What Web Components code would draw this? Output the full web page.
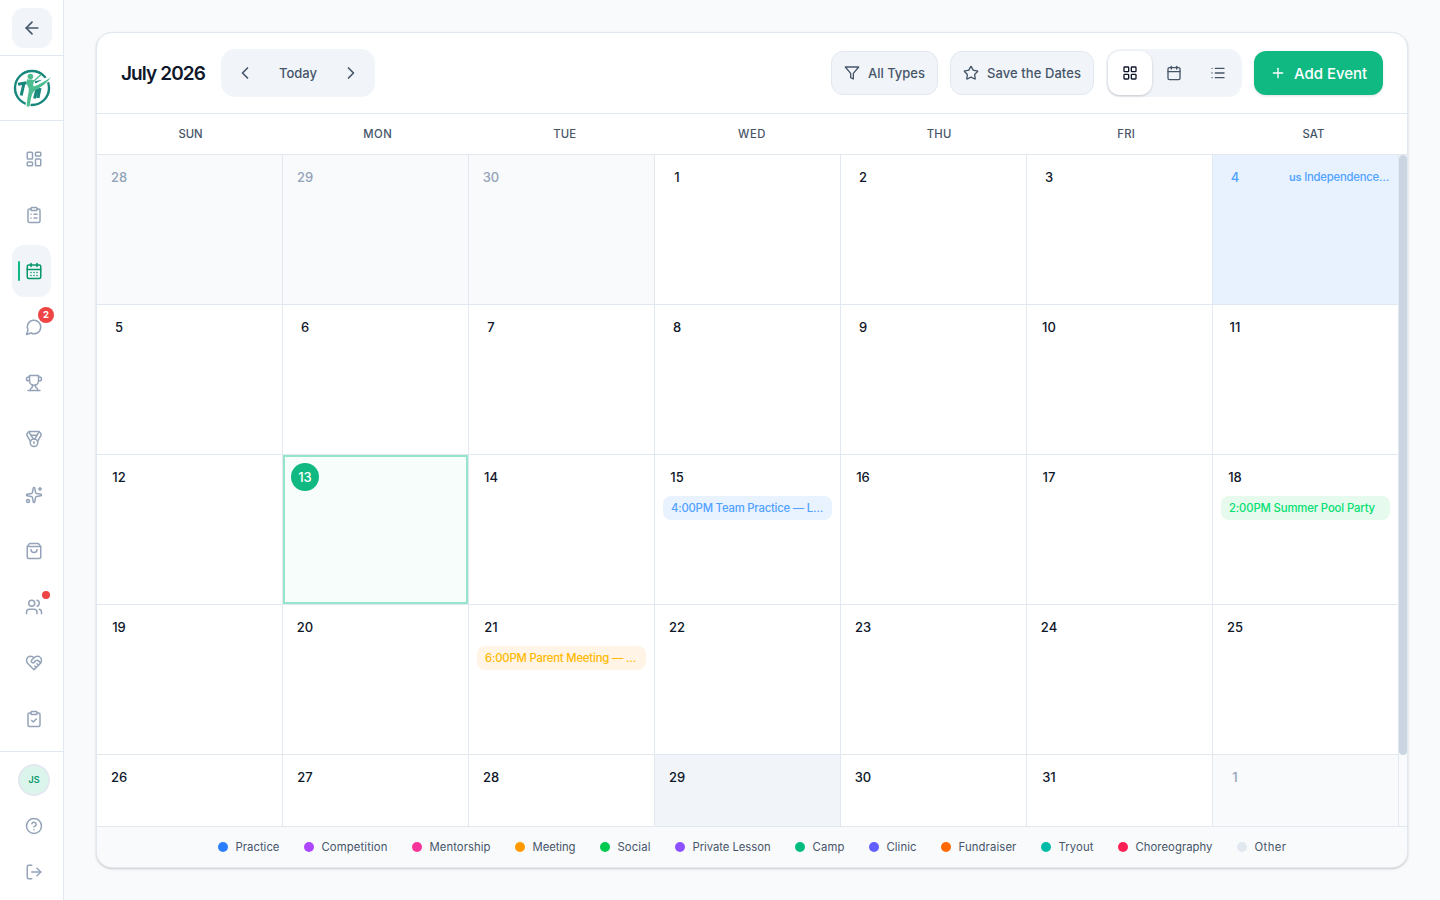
<!DOCTYPE html>
<html lang="en">
<head>
<meta charset="utf-8">
<title>Team Calendar</title>
<style>
    body {
        margin: 0;
        height: 900px;
        overflow: hidden;
        background: #f8fafc;
        color: #0f172a;
        font-family: Inter, "Liberation Sans", sans-serif;
    }
</style>
</head>
<body>
<team-app></team-app>

<script>
const ICONS = {
    back: '<path d="m12 19-7-7 7-7"/><path d="M19 12H5"/>',
    dashboard: '<rect width="7" height="9" x="3" y="3" rx="1"/><rect width="7" height="5" x="14" y="3" rx="1"/><rect width="7" height="9" x="14" y="12" rx="1"/><rect width="7" height="5" x="3" y="16" rx="1"/>',
    clipboardList: '<rect width="8" height="4" x="8" y="2" rx="1"/><path d="M16 4h2a2 2 0 0 1 2 2v14a2 2 0 0 1-2 2H6a2 2 0 0 1-2-2V6a2 2 0 0 1 2-2h2"/><path d="M12 11h4"/><path d="M12 16h4"/><path d="M8 11h.01"/><path d="M8 16h.01"/>',
    calendarDays: '<path d="M8 2v4"/><path d="M16 2v4"/><rect width="18" height="18" x="3" y="4" rx="2"/><path d="M3 10h18"/><path d="M8 14h.01"/><path d="M12 14h.01"/><path d="M16 14h.01"/><path d="M8 18h.01"/><path d="M12 18h.01"/><path d="M16 18h.01"/>',
    message: '<path d="M7.9 20A9 9 0 1 0 4 16.1L2 22Z"/>',
    trophy: '<path d="M6 9H4.5a2.5 2.5 0 0 1 0-5H6"/><path d="M18 9h1.5a2.5 2.5 0 0 0 0-5H18"/><path d="M4 22h16"/><path d="M10 14.66V17c0 .55-.47.98-.97 1.21C7.85 18.75 7 20.24 7 22"/><path d="M14 14.66V17c0 .55.47.98.97 1.21C16.15 18.75 17 20.24 17 22"/><path d="M18 2H6v7a6 6 0 0 0 12 0V2Z"/>',
    medal: '<path d="M7.21 15 2.66 7.14a2 2 0 0 1 .13-2.2L4.4 2.8A2 2 0 0 1 6 2h12a2 2 0 0 1 1.6.8l1.6 2.14a2 2 0 0 1 .14 2.2L16.79 15"/><path d="M11 12 5.12 2.2"/><path d="m13 12 5.88-9.8"/><path d="M8 7h8"/><circle cx="12" cy="17" r="5"/><path d="M12 18v-2h-.5"/>',
    sparkles: '<path d="M11.017 2.814a1 1 0 0 1 1.966 0l1.051 5.558a2 2 0 0 0 1.594 1.594l5.558 1.051a1 1 0 0 1 0 1.966l-5.558 1.051a2 2 0 0 0-1.594 1.594l-1.051 5.558a1 1 0 0 1-1.966 0l-1.051-5.558a2 2 0 0 0-1.594-1.594l-5.558-1.051a1 1 0 0 1 0-1.966l5.558-1.051a2 2 0 0 0 1.594-1.594z"/><path d="M20 2v4"/><path d="M22 4h-4"/><circle cx="4" cy="20" r="2"/>',
    bag: '<path d="M16 10a4 4 0 0 1-8 0"/><path d="M3.103 6.034h17.794"/><path d="M3.4 5.467a2 2 0 0 0-.4 1.2V20a2 2 0 0 0 2 2h14a2 2 0 0 0 2-2V6.667a2 2 0 0 0-.4-1.2l-2-2.667A2 2 0 0 0 17 2H7a2 2 0 0 0-1.6.8z"/>',
    users: '<path d="M16 21v-2a4 4 0 0 0-4-4H6a4 4 0 0 0-4 4v2"/><circle cx="9" cy="7" r="4"/><path d="M22 21v-2a4 4 0 0 0-3-3.87"/><path d="M16 3.13a4 4 0 0 1 0 7.75"/>',
    handshake: '<path d="M19 14c1.49-1.46 3-3.21 3-5.5A5.5 5.5 0 0 0 16.5 3c-1.76 0-3 .5-4.5 2-1.5-1.5-2.74-2-4.5-2A5.5 5.5 0 0 0 2 8.5c0 2.3 1.5 4.05 3 5.5l7 7Z"/><path d="M12 5 9.04 7.96a2.17 2.17 0 0 0 0 3.08c.82.82 2.13.85 3 .07l2.07-1.9a2.82 2.82 0 0 1 3.79 0l2.96 2.66"/><path d="m18 15-2-2"/><path d="m15 18-2-2"/>',
    clipboardCheck: '<rect width="8" height="4" x="8" y="2" rx="1"/><path d="M16 4h2a2 2 0 0 1 2 2v14a2 2 0 0 1-2 2H6a2 2 0 0 1-2-2V6a2 2 0 0 1 2-2h2"/><path d="m9 14 2 2 4-4"/>',
    help: '<circle cx="12" cy="12" r="10"/><path d="M9.09 9a3 3 0 0 1 5.83 1c0 2-3 3-3 3"/><path d="M12 17h.01"/>',
    logout: '<path d="M9 21H5a2 2 0 0 1-2-2V5a2 2 0 0 1 2-2h4"/><path d="m16 17 5-5-5-5"/><path d="M21 12H9"/>',
    left: '<path d="m15 18-6-6 6-6"/>',
    right: '<path d="m9 18 6-6-6-6"/>',
    filter: '<path d="M22 3H2l8 9.46V19l4 2v-8.54Z"/>',
    star: '<path d="M11.525 2.295a.53.53 0 0 1 .95 0l2.31 4.679a2.123 2.123 0 0 0 1.595 1.16l5.166.756a.53.53 0 0 1 .294.904l-3.736 3.638a2.123 2.123 0 0 0-.611 1.878l.882 5.14a.53.53 0 0 1-.771.56l-4.618-2.428a2.122 2.122 0 0 0-1.973 0L6.396 21.01a.53.53 0 0 1-.77-.56l.881-5.139a2.122 2.122 0 0 0-.611-1.879L2.16 9.795a.53.53 0 0 1 .294-.906l5.165-.755a2.122 2.122 0 0 0 1.597-1.16z"/>',
    grid: '<rect width="7" height="7" x="3" y="3" rx="1"/><rect width="7" height="7" x="14" y="3" rx="1"/><rect width="7" height="7" x="14" y="14" rx="1"/><rect width="7" height="7" x="3" y="14" rx="1"/>',
    calendar: '<path d="M8 2v4"/><path d="M16 2v4"/><rect width="18" height="18" x="3" y="4" rx="2"/><path d="M3 10h18"/>',
    list: '<path d="M3 5h.01"/><path d="M3 12h.01"/><path d="M3 19h.01"/><path d="M8 5h13"/><path d="M8 12h13"/><path d="M8 19h13"/>',
    plus: '<path d="M5 12h14"/><path d="M12 5v14"/>'
};

class UiIcon extends HTMLElement {
    constructor() {
        super();
        this.attachShadow({ mode: 'open' });
    }

    connectedCallback() {
        const size = this.getAttribute('size') || 18;
        this.shadowRoot.innerHTML = `
            <style>
                :host { display: block; flex: none; width: ${size}px; height: ${size}px; }
                svg { display: block; }
            </style>
            <svg width="${size}" height="${size}" viewBox="0 0 24 24" fill="none" stroke="currentColor"
                stroke-width="2" stroke-linecap="round" stroke-linejoin="round">${ICONS[this.getAttribute('name')]}</svg>
        `;
    }
}
customElements.define('ui-icon', UiIcon);

// Label with a fixed width: the tracking is adjusted until the text fills it.
class FitLabel extends HTMLElement {
    constructor() {
        super();
        this.attachShadow({ mode: 'open' });
        this.shadowRoot.innerHTML = `
            <style>
                :host { display: block; flex: none; white-space: nowrap; }
                span { display: inline-block; }
            </style>
            <span><slot></slot></span>
        `;
    }

    connectedCallback() {
        const width = Number(this.getAttribute('width'));
        const span = this.shadowRoot.querySelector('span');
        const natural = span.getBoundingClientRect().width;
        const count = this.textContent.length;
        this.style.width = width + 'px';
        span.style.letterSpacing = ((width - natural) / count).toFixed(3) + 'px';
    }
}

class NavItem extends HTMLElement {
    constructor() {
        super();
        this.attachShadow({ mode: 'open' });
    }

    connectedCallback() {
        const badge = this.getAttribute('badge');
        this.shadowRoot.innerHTML = `
            <style>
                :host {
                    display: flex;
                    position: relative;
                    align-items: center;
                    box-sizing: border-box;
                    width: 39px;
                    height: 52px;
                    padding-left: 13px;
                    border-radius: 12px;
                    color: #94a3b8;
                }
                :host([active]) { background: #f1f5f9; color: #059669; }
                .bar { position: absolute; left: 6px; top: 16px; width: 2px; height: 20px; border-radius: 1px; background: #10b981; }
                .badge {
                    position: absolute; left: 26px; top: 6px;
                    width: 16px; height: 16px; border-radius: 8px;
                    background: #ef4444; color: #fff;
                    font-weight: 700; font-size: 9.5px; line-height: 16px; text-align: center;
                }
                .dot { position: absolute; left: 30px; top: 10px; width: 8px; height: 8px; border-radius: 4px; background: #ef4444; }
            </style>
            ${this.hasAttribute('active') ? '<div class="bar"></div>' : ''}
            <ui-icon name="${this.getAttribute('icon')}"></ui-icon>
            ${badge ? `<div class="badge">${badge}</div>` : ''}
            ${this.hasAttribute('dot') ? '<div class="dot"></div>' : ''}
        `;
    }
}
customElements.define('nav-item', NavItem);

class ClubLogo extends HTMLElement {
    constructor() {
        super();
        this.attachShadow({ mode: 'open' });
        this.shadowRoot.innerHTML = `
            <style>:host { display: block; } svg { display: block; }</style>
            <svg width="40" height="40" viewBox="0 0 40 40">
                <circle cx="20" cy="20" r="17" fill="#fff" stroke="#16877a" stroke-width="2.4"/>
                <g fill="none" stroke="#16877a">
                    <path d="M6 16.3 14.6 14.8" stroke-width="3"/>
                    <path d="M12 15 9.2 27.5M25 20.5 22.6 30.5M30 12.5 28.4 17M28 20 26 30" stroke-width="3"/>
                    <path d="m23 14.4 7-1.4" stroke-width="2.4"/>
                </g>
                <g fill="none" stroke-linecap="round" stroke-linejoin="round">
                    <path d="M20 20.5 37.5 10.5M19 24l-3 13" stroke="#fff" stroke-width="5"/>
                    <path d="m15.6 11.8 1 1.6 5.6-.6 6.4-5.8" stroke="#4dbd91" stroke-width="1.5"/>
                </g>
                <circle cx="18.4" cy="8.6" r="2.8" fill="#4dbd91"/>
                <path d="M14.8 12.2c2.6-1 5.2-.8 7.4.1-.6 2.3-1.2 4.1-.8 6.3 5.8-1.8 11-5.3 17.6-9.4-3.6 5.4-9.3 9.6-15.6 13-2.2 1.2-3.6 4.4-4.4 8l-1.5 8.3h-2.9c.6-4.6.7-9.2 1.9-14 .3-1.6.3-3 .2-4.4-1-2.3-2.7-4.6-1.9-7.9Z" fill="#4dbd91"/>
            </svg>
        `;
    }
}
customElements.define('club-logo', ClubLogo);

class SideBar extends HTMLElement {
    constructor() {
        super();
        this.attachShadow({ mode: 'open' });
        this.shadowRoot.innerHTML = `
            <style>
                :host {
                    display: flex;
                    flex-direction: column;
                    box-sizing: border-box;
                    width: 64px;
                    height: 900px;
                    background: #fff;
                    border-right: 1px solid #e2e8f0;
                }
                .back { height: 55px; padding: 8px 0 0 12px; box-sizing: border-box; }
                .back div {
                    display: grid; place-items: center;
                    width: 40px; height: 40px; border-radius: 12px;
                    background: #f1f5f9; color: #475569;
                }
                .logo {
                    display: flex; align-items: center; box-sizing: border-box;
                    height: 66px; padding-left: 12px;
                    border: solid #e2e8f0; border-width: 1px 0;
                }
                nav { display: flex; flex-direction: column; gap: 4px; flex: 1; padding: 12px 0 0 12px; }
                footer {
                    display: flex; flex-direction: column; align-items: center; box-sizing: border-box;
                    height: 149px; padding: 12px 0 0 5px;
                    border-top: 1px solid #e2e8f0; color: #94a3b8;
                }
                .avatar {
                    box-sizing: border-box; width: 32px; height: 32px;
                    border: 2px solid #e2e8f0; border-radius: 50%;
                    background: #dbf5ec; color: #059669;
                    font-weight: 600; font-size: 9px; line-height: 28px; text-align: center;
                }
                footer ui-icon { margin-top: 21px; }
                footer ui-icon + ui-icon { margin-top: 28px; }
            </style>
            <div class="back"><div><ui-icon name="back" size="20"></ui-icon></div></div>
            <div class="logo"><club-logo></club-logo></div>
            <nav>
                <nav-item icon="dashboard"></nav-item>
                <nav-item icon="clipboardList"></nav-item>
                <nav-item icon="calendarDays" active></nav-item>
                <nav-item icon="message" badge="2"></nav-item>
                <nav-item icon="trophy"></nav-item>
                <nav-item icon="medal"></nav-item>
                <nav-item icon="sparkles"></nav-item>
                <nav-item icon="bag"></nav-item>
                <nav-item icon="users" dot></nav-item>
                <nav-item icon="handshake"></nav-item>
                <nav-item icon="clipboardCheck"></nav-item>
            </nav>
            <footer>
                <div class="avatar">JS</div>
                <ui-icon name="help"></ui-icon>
                <ui-icon name="logout"></ui-icon>
            </footer>
        `;
    }
}
customElements.define('side-bar', SideBar);

class CalendarToolbar extends HTMLElement {
    constructor() {
        super();
        this.attachShadow({ mode: 'open' });
        this.shadowRoot.innerHTML = `
            <style>
                :host {
                    display: flex;
                    align-items: center;
                    box-sizing: border-box;
                    height: 81px;
                    padding: 0 24px;
                    border-bottom: 1px solid #e2e8f0;
                    color: #475569;
                    font-size: 13px;
                    font-weight: 500;
                }
                h2 { margin: 0 16px 0 0; font-size: 19px; font-weight: 600; color: #0f172a; }
                .group { display: flex; padding: 2px; border-radius: 14px; background: #f1f5f9; }
                .cell { display: grid; place-items: center; width: 44px; height: 44px; border-radius: 12px; }
                .today { width: 62px; }
                .on { background: #fff; color: #0f172a; box-shadow: 0 1px 3px rgba(0, 0, 0, .12), 0 1px 2px rgba(0, 0, 0, .08); }
                .actions { display: flex; align-items: center; gap: 12px; margin-left: auto; }
                .button {
                    display: flex; align-items: center; gap: 8px; box-sizing: border-box;
                    height: 44px; padding: 0 12px; border-radius: 12px;
                    border: 1px solid #e2e8f0; background: #f1f5f9;
                }
                .add {
                    padding: 0 16px; border: 0; background: #10b981; color: #fff;
                    font-size: 15px; box-shadow: 0 1px 3px rgba(0, 0, 0, .12);
                }
            </style>
            <h2><fit-label width="84">July 2026</fit-label></h2>
            <div class="group">
                <div class="cell"><ui-icon name="left" size="20"></ui-icon></div>
                <div class="cell today"><fit-label width="38">Today</fit-label></div>
                <div class="cell"><ui-icon name="right" size="20"></ui-icon></div>
            </div>
            <div class="actions">
                <div class="button"><ui-icon name="filter" size="16"></ui-icon><fit-label width="57">All Types</fit-label></div>
                <div class="button"><ui-icon name="star" size="16"></ui-icon><fit-label width="94">Save the Dates</fit-label></div>
                <div class="group">
                    <div class="cell on"><ui-icon name="grid" size="16"></ui-icon></div>
                    <div class="cell"><ui-icon name="calendar" size="16"></ui-icon></div>
                    <div class="cell"><ui-icon name="list" size="16"></ui-icon></div>
                </div>
                <div class="button add"><ui-icon name="plus" size="16"></ui-icon><fit-label width="73">Add Event</fit-label></div>
            </div>
        `;
    }
}
customElements.define('calendar-toolbar', CalendarToolbar);

class DayCell extends HTMLElement {
    constructor() {
        super();
        this.attachShadow({ mode: 'open' });
    }

    connectedCallback() {
        this.shadowRoot.innerHTML = `
            <style>
                :host {
                    display: block;
                    box-sizing: border-box;
                    min-width: 0;
                    padding: 8px;
                    border: solid #e2e8f0;
                    border-width: 0 1px 1px 0;
                    background: #fff;
                    font-size: 13px;
                    font-weight: 500;
                }
                :host([kind=outside]) { background: #f8fafc; color: #94a3b8; }
                :host([kind=hover]) { background: #f1f5f9; }
                :host([kind=holiday]) { background: #e8f2ff; color: #51a2ff; }
                :host([kind=today]) { background: #f6fdfb; box-shadow: inset 0 0 0 2px #94e5c9; }
                .top { display: flex; align-items: center; justify-content: space-between; margin-bottom: 5px; }
                .number { width: 28px; height: 28px; line-height: 28px; border-radius: 50%; text-align: center; }
                :host([kind=today]) .number { background: #10b981; color: #fff; }
            </style>
            <div class="top">
                <div class="number">${this.getAttribute('day')}</div>
                <slot name="note"></slot>
            </div>
            <slot></slot>
        `;
    }
}
customElements.define('day-cell', DayCell);

class EventChip extends HTMLElement {
    constructor() {
        super();
        this.attachShadow({ mode: 'open' });
        this.shadowRoot.innerHTML = `
            <style>
                :host {
                    display: block;
                    height: 24px;
                    padding: 0 8px;
                    border-radius: 8px;
                    font-size: 11.3px;
                    font-weight: 500;
                    line-height: 24px;
                }
                :host([type=practice]) { background: #e9f2ff; color: #51a2ff; }
                :host([type=social]) { background: #e6faed; color: #05df72; }
                :host([type=meeting]) { background: #fff4e5; color: #ffb900; }
            </style>
            <slot></slot>
        `;
    }
}
customElements.define('event-chip', EventChip);

class CalendarMonth extends HTMLElement {
    constructor() {
        super();
        this.attachShadow({ mode: 'open' });
        const weekdays = [['SUN', 24], ['MON', 29], ['TUE', 23], ['WED', 28], ['THU', 25], ['FRI', 18], ['SAT', 22]];
        const kinds = { 0: 'outside', 1: 'outside', 2: 'outside', 6: 'holiday', 15: 'today', 31: 'hover', 34: 'outside' };
        const content = {
            6: '<fit-label slot="note" class="note" width="100"><small>us</small> Independence…</fit-label>',
            17: '<event-chip type="practice"><fit-label width="152">4:00PM Team Practice — L…</fit-label></event-chip>',
            20: '<event-chip type="social"><fit-label width="146">2:00PM Summer Pool Party</fit-label></event-chip>',
            23: '<event-chip type="meeting"><fit-label width="151">6:00PM Parent Meeting — …</fit-label></event-chip>'
        };
        let cells = '';
        for (let i = 0; i < 35; i++) {
            const day = i < 3 ? 28 + i : (i - 3) % 31 + 1;
            cells += `<day-cell day="${day}" kind="${kinds[i] || ''}">${content[i] || ''}</day-cell>`;
        }
        this.shadowRoot.innerHTML = `
            <style>
                :host { display: flex; flex-direction: column; flex: 1; min-height: 0; }
                .weekdays {
                    display: grid; grid-template-columns: repeat(7, 1fr); justify-items: center; align-items: center;
                    height: 40px; border-bottom: 1px solid #e2e8f0;
                    font-size: 11.3px; font-weight: 500; color: #475569;
                }
                .scroller { display: flex; flex: 1; min-height: 0; overflow: hidden; }
                .days { display: grid; flex: 1; grid-template-columns: repeat(7, 186px); grid-auto-rows: 150px; }
                .track { width: 8px; background: #f8fafc; }
                .thumb { height: 600px; border-radius: 4px; background: #cbd5e1; }
                .note { font-size: 11.3px; margin-right: 1px; }
                small { font-size: 11px; font-weight: 600; }
            </style>
            <div class="weekdays">${weekdays.map(([name, width]) => `<fit-label width="${width}">${name}</fit-label>`).join('')}</div>
            <div class="scroller">
                <div class="days">${cells}</div>
                <div class="track"><div class="thumb"></div></div>
            </div>
        `;
    }
}
customElements.define('calendar-month', CalendarMonth);

class CalendarLegend extends HTMLElement {
    constructor() {
        super();
        this.attachShadow({ mode: 'open' });
        const types = [
            ['Practice', '#2b7fff', 44], ['Competition', '#ad46ff', 66], ['Mentorship', '#f6339a', 61],
            ['Meeting', '#fe9a00', 43], ['Social', '#00c950', 33], ['Private Lesson', '#8e51ff', 78],
            ['Camp', '#00bc7d', 32], ['Clinic', '#615fff', 30], ['Fundraiser', '#ff6900', 58],
            ['Tryout', '#00bba7', 35], ['Choreography', '#ff2056', 77], ['Other', '#e2e8f0', 32]
        ];
        this.shadowRoot.innerHTML = `
            <style>
                :host {
                    display: flex;
                    align-items: center;
                    justify-content: center;
                    gap: 24px;
                    height: 40px;
                    border-top: 1px solid #e2e8f0;
                    background: #f8fafc;
                    color: #475569;
                    font-size: 11.3px;
                }
                .item { display: flex; align-items: center; gap: 8px; }
                i { width: 10px; height: 10px; border-radius: 50%; }
            </style>
            ${types.map(([name, color, width]) => `
                <div class="item"><i style="background: ${color}"></i><fit-label width="${width}">${name}</fit-label></div>
            `).join('')}
        `;
    }
}
customElements.define('calendar-legend', CalendarLegend);

class TeamApp extends HTMLElement {
    constructor() {
        super();
        this.attachShadow({ mode: 'open' });
        this.shadowRoot.innerHTML = `
            <style>
                :host { display: flex; height: 900px; }
                main { flex: 1; padding: 32px; }
                .card {
                    display: flex; flex-direction: column; box-sizing: border-box; height: 836px;
                    overflow: hidden; background: #fff;
                    border: 1px solid #e2e8f0; border-radius: 16px;
                    box-shadow: 0 1px 3px rgba(0, 0, 0, .1), 0 1px 2px rgba(0, 0, 0, .1);
                }
            </style>
            <side-bar></side-bar>
            <main>
                <div class="card">
                    <calendar-toolbar></calendar-toolbar>
                    <calendar-month></calendar-month>
                    <calendar-legend></calendar-legend>
                </div>
            </main>
        `;
    }
}
customElements.define('team-app', TeamApp);

// Registered last, when every label is already laid out in its final font.
customElements.define('fit-label', FitLabel);
</script>
</body>
</html>
